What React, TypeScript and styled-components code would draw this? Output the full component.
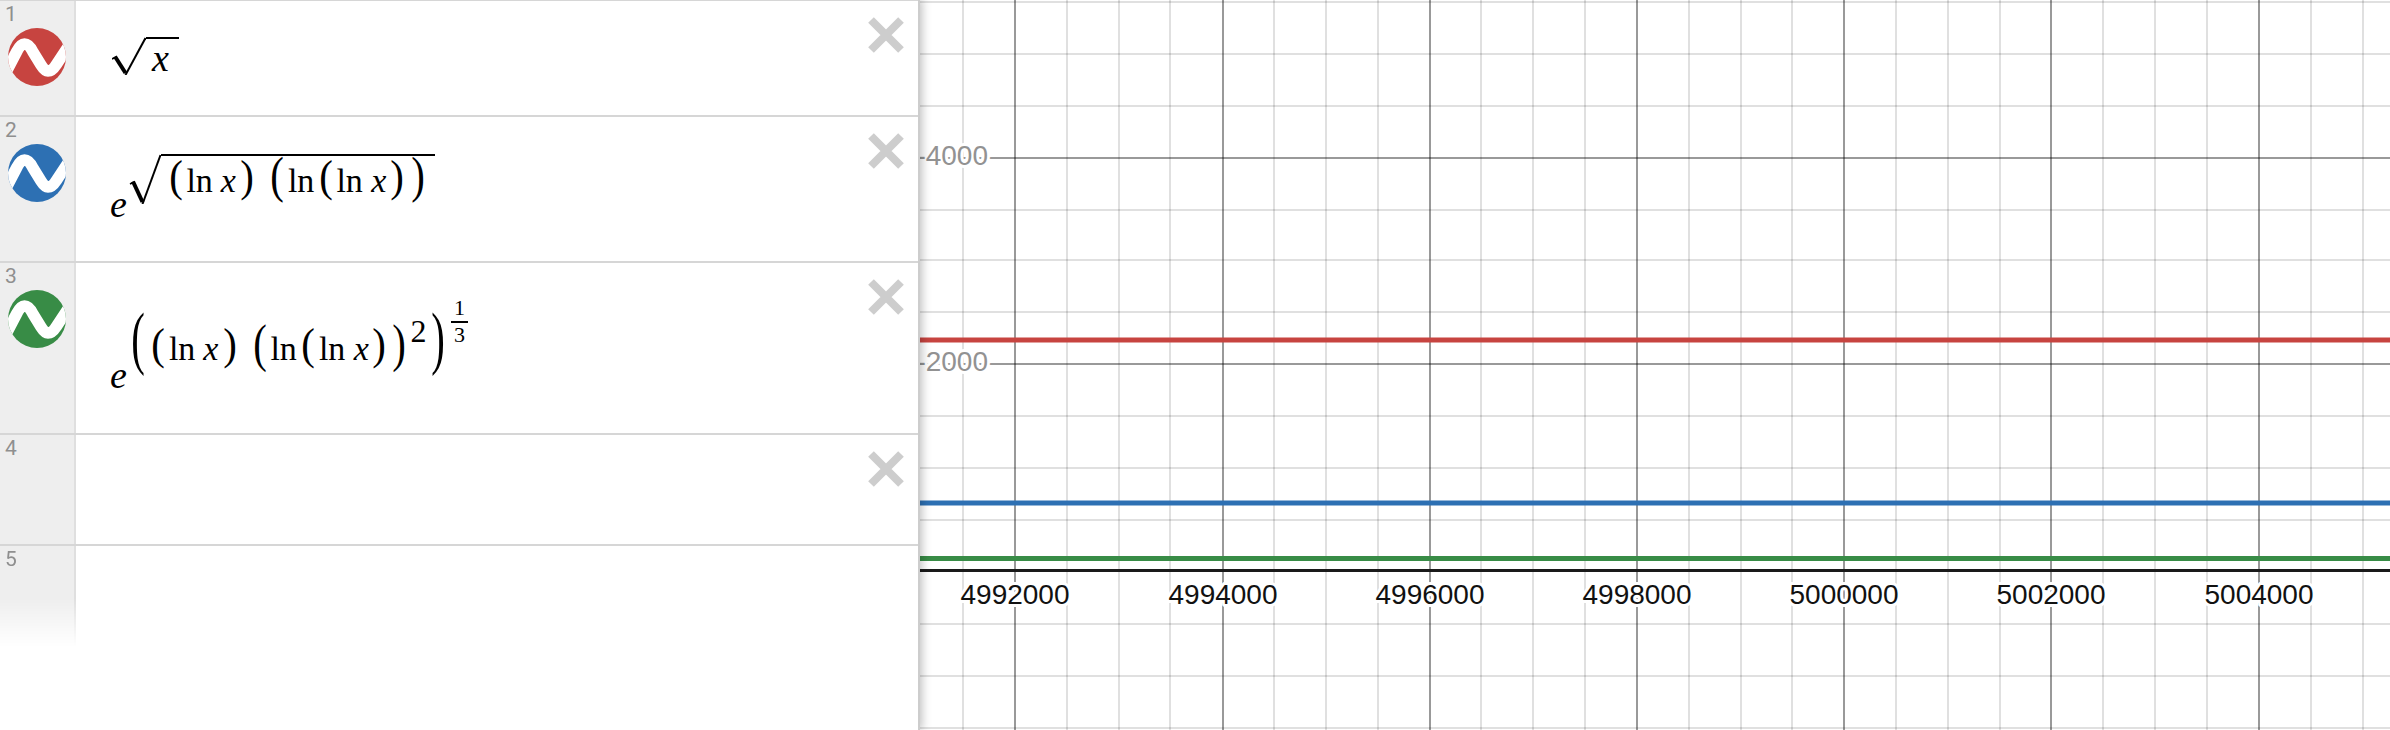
import React from 'react'
import styled, {createGlobalStyle} from 'styled-components'

const GlobalStyle = createGlobalStyle`
  html, body {
    margin: 0;
    height: 100%;
    background: #fff;
    overflow: hidden;
  }
`

const Page = styled.div`
  display: flex;
  width: 2390px;
  height: 730px;
  overflow: hidden;
  font-family: 'Liberation Sans', Arial, sans-serif;
`

const Panel = styled.div`
  position: relative;
  z-index: 2;
  box-sizing: border-box;
  flex: 0 0 920px;
  height: 731px;
  margin-top: -1px;
  background: #fff;
  border-right: 2px solid #cdcdcd;
  box-shadow: 2px 0 9px rgba(0, 0, 0, 0.25);
`

const Row = styled.div<{$h: number}>`
  display: flex;
  box-sizing: border-box;
  height: ${(p) => p.$h}px;
  border-top: 2px solid #d6d6d6;
`

const Gutter = styled.div<{$fade?: boolean}>`
  box-sizing: border-box;
  flex: 0 0 76px;
  background: #eeeeee;
  border-right: 2px solid #dfdfdf;
  ${(p) => p.$fade && 'mask-image: linear-gradient(#000 52%, transparent 100%);'}
`

const LineNumber = styled.div`
  padding: 3px 0 0 5px;
  font-family: Roboto, 'Liberation Sans', sans-serif;
  font-size: 21px;
  line-height: 21px;
  color: #8f8f8f;
`

const Icon = styled.svg`
  display: block;
  margin: 3px 0 0 8px;
`

const MathCell = styled.div<{$left: number; $top: number}>`
  flex: 1;
  padding: ${(p) => p.$top}px 0 0 ${(p) => p.$left}px;
  font-family: 'Liberation Serif', 'Times New Roman', serif;
  font-size: 38px;
  line-height: 38px;
  color: #000;
  white-space: nowrap;
`

const Var = styled.i<{$ml?: number}>`
  display: inline-block;
  margin-left: ${(p) => p.$ml ?? 0}px;
`

const Fn = styled.span<{$ml?: number}>`
  display: inline-block;
  margin-left: ${(p) => p.$ml ?? 0}px;
`

const Paren = styled.span<{$ml?: number; $sy: number; $dy?: number}>`
  display: inline-block;
  width: 14px;
  margin-left: ${(p) => p.$ml ?? 0}px;
  text-align: center;
  transform: translateY(${(p) => p.$dy ?? -3.5}px) scale(1.2, ${(p) => p.$sy});
  transform-origin: 50% 59%;
`

const Raised = styled.span<{$by: number; $size: number}>`
  display: inline-block;
  vertical-align: ${(p) => p.$by}px;
  font-size: ${(p) => p.$size}px;
  line-height: ${(p) => p.$size}px;
`

const Power = styled.span<{$ml: number}>`
  display: inline-block;
  margin-left: ${(p) => p.$ml}px;
  vertical-align: 18px;
  font-size: 32px;
  line-height: 32px;
`

const Radical = styled.span<{$sign: number}>`
  position: relative;
  display: inline-block;
  padding-left: ${(p) => p.$sign}px;
`

const RadicalSign = styled.svg`
  position: absolute;
  left: 0;
  top: 0;
`

const Radicand = styled.span<{$pad: number; $right: number}>`
  display: inline-block;
  padding: ${(p) => p.$pad}px ${(p) => p.$right}px 0 0;
  border-top: 2px solid #000;
`

const Fraction = styled.span<{$ml: number}>`
  display: inline-flex;
  flex-direction: column;
  align-items: center;
  width: 17px;
  margin-left: ${(p) => p.$ml}px;
  vertical-align: 45px;
  font-size: 22px;
  line-height: 22px;
`

const FractionBar = styled.span`
  display: block;
  width: 17px;
  height: 2px;
  margin: 2px 0 1px;
  background: #000;
`

const DeleteIcon = styled.svg`
  flex: none;
  margin: 16px 14px 0 0;
`

const Graph = styled.div`
  flex: 1;
  height: 730px;
  background: #fff;
`

const GraphSvg = styled.svg`
  display: block;
`

const AxisLabel = styled.text<{$fill: string}>`
  font-family: 'Liberation Sans', Arial, sans-serif;
  font-size: 28px;
  fill: ${(p) => p.$fill};
  stroke: #fff;
  stroke-width: 6px;
  stroke-linejoin: round;
  paint-order: stroke;
`

const WAVE = 'M-3 46L8.5 24C11 19 13.5 16 16.5 16C20 16 22.5 19 25 24L33 37C35.5 41 37.5 43 40 43C43 43 45.5 41 48 37L62 16'

const ExprIcon = ({color, id}: {color: string; id: string}) => (
  <Icon width='58' height='58' viewBox='0 0 58 58'>
    <clipPath id={id}>
      <circle cx='29' cy='29' r='29' />
    </clipPath>
    <circle cx='29' cy='29' r='29' fill={color} />
    <path d={WAVE} fill='none' stroke='#fff' strokeWidth='11.5' clipPath={`url(#${id})`} />
  </Icon>
)

const DeleteX = () => (
  <DeleteIcon width='36' height='36' viewBox='0 0 36 36'>
    <path d='M3 3L33 33M33 3L3 33' stroke='#cdcdcd' strokeWidth='8' fill='none' />
  </DeleteIcon>
)

type SignProps = {w: number; h: number; run: number; rise: number; start: number}

const Sign = ({w, h, run, rise, start}: SignProps) => (
  <RadicalSign width={w} height={h} viewBox={`0 0 ${w} ${h}`}>
    <path d={`M${start} ${h - rise + 2}L${start + 4} ${h - rise}`} stroke='#000' strokeWidth='1.6' fill='none' />
    <path d={`M${start + 3} ${h - rise - 0.5}L${w - run} ${h - 2}`} stroke='#000' strokeWidth='4' fill='none' />
    <path d={`M${w - run} ${h}L${w - 0.5} 1`} stroke='#000' strokeWidth='2' fill='none' />
  </RadicalSign>
)

// rows 2 and 3 share this body, only the lead gap and the big paren height differ
const LnProduct = ({lead, big}: {lead: number; big: number}) => (
  <>
    <Paren $ml={lead} $sy={1.32}>(</Paren>
    <Fn $ml={3.5}>ln</Fn>
    <Var $ml={8}>x</Var>
    <Paren $ml={4.5} $sy={1.32}>)</Paren>
    <Paren $ml={16} $sy={big}>(</Paren>
    <Fn $ml={3.5}>ln</Fn>
    <Paren $ml={4.5} $sy={1.32}>(</Paren>
    <Fn $ml={3.5}>ln</Fn>
    <Var $ml={8.5}>x</Var>
    <Paren $ml={3.5} $sy={1.32}>)</Paren>
  </>
)

const MINOR_X = 207.33 / 4
const xs = Array.from({length: 29}, (_, i) => 1015 + (i - 1) * MINOR_X)
const ys = [2, 54, 106, 158, 210, 260, 312, 364, 416, 468, 520, 572, 624, 676, 728]
const MAJOR_X = [1015, 1223, 1430, 1637, 1844, 2051, 2259]
const MAJOR_Y = [158, 364]
const X_LABELS = ['4992000', '4994000', '4996000', '4998000', '5000000', '5002000', '5004000']

const GraphPaper = () => (
  <GraphSvg width='1470' height='730' viewBox='920 0 1470 730'>
    {xs
      .filter((_, i) => (i - 1) % 4 !== 0)
      .map((x) => (
        <line key={x} x1={Math.round(x)} x2={Math.round(x)} y1='0' y2='730' stroke='#000' strokeOpacity='0.12' strokeWidth='2' />
      ))}
    {ys
      .filter((y) => !MAJOR_Y.includes(y) && y !== 572)
      .map((y) => (
        <line key={y} x1='920' x2='2390' y1={y} y2={y} stroke='#000' strokeOpacity='0.12' strokeWidth='2' />
      ))}
    {MAJOR_X.map((x) => (
      <line key={x} x1={x} x2={x} y1='0' y2='730' stroke='#000' strokeOpacity='0.4' strokeWidth='2' />
    ))}
    {MAJOR_Y.map((y) => (
      <line key={y} x1='920' x2='2390' y1={y} y2={y} stroke='#000' strokeOpacity='0.4' strokeWidth='2' />
    ))}
    <line x1='920' x2='2390' y1='340' y2='340' stroke='#c74440' strokeWidth='5' />
    <line x1='920' x2='2390' y1='503' y2='503' stroke='#2d70b3' strokeWidth='5' />
    <line x1='920' x2='2390' y1='558.5' y2='558.5' stroke='#388c46' strokeWidth='5' />
    <line x1='920' x2='2390' y1='570.5' y2='570.5' stroke='#1a1a1a' strokeWidth='3' />
    <AxisLabel $fill='#929292' x='988' y='165' textAnchor='end'>-4000</AxisLabel>
    <AxisLabel $fill='#929292' x='988' y='371' textAnchor='end'>-2000</AxisLabel>
    {X_LABELS.map((label, i) => (
      <AxisLabel key={label} $fill='#111' x={MAJOR_X[i]} y='604' textAnchor='middle'>
        {label}
      </AxisLabel>
    ))}
  </GraphSvg>
)

export default function App() {
  return (
    <Page>
      <GlobalStyle />
      <Panel>
        <Row $h={116}>
          <Gutter>
            <LineNumber>1</LineNumber>
            <ExprIcon color='#c74440' id='wave-1' />
          </Gutter>
          <MathCell $left={36} $top={36}>
            <Radical $sign={34}>
              <Sign w={34} h={38} run={20.5} rise={18} start={0} />
              <Radicand $pad={0} $right={10}>
                <Var $ml={6}>x</Var>
              </Radicand>
            </Radical>
          </MathCell>
          <DeleteX />
        </Row>
        <Row $h={146}>
          <Gutter>
            <LineNumber>2</LineNumber>
            <ExprIcon color='#2d70b3' id='wave-2' />
          </Gutter>
          <MathCell $left={34} $top={37}>
            <i>e</i>
            <Raised $by={25} $size={34}>
              <Radical $sign={34}>
                <Sign w={34} h={50} run={18.5} rise={22} start={3} />
                <Radicand $pad={8} $right={10}>
                  <LnProduct lead={8} big={1.5} />
                  <Paren $ml={7} $sy={1.5}>)</Paren>
                </Radicand>
              </Radical>
            </Raised>
          </MathCell>
          <DeleteX />
        </Row>
        <Row $h={172}>
          <Gutter>
            <LineNumber>3</LineNumber>
            <ExprIcon color='#388c46' id='wave-3' />
          </Gutter>
          <MathCell $left={34} $top={34}>
            <i>e</i>
            <Raised $by={28} $size={34}>
              <Paren $ml={4} $sy={2.03} $dy={-7.5}>(</Paren>
              <LnProduct lead={6.5} big={1.54} />
              <Paren $ml={6} $sy={1.54}>)</Paren>
              <Power $ml={4}>2</Power>
              <Paren $ml={5} $sy={2.03} $dy={-7.5}>)</Paren>
              <Fraction $ml={5.5}>
                <span>1</span>
                <FractionBar />
                <span>3</span>
              </Fraction>
            </Raised>
          </MathCell>
          <DeleteX />
        </Row>
        <Row $h={111}>
          <Gutter>
            <LineNumber>4</LineNumber>
          </Gutter>
          <MathCell $left={34} $top={36} />
          <DeleteX />
        </Row>
        <Row $h={103}>
          <Gutter $fade>
            <LineNumber>5</LineNumber>
          </Gutter>
          <MathCell $left={34} $top={36} />
        </Row>
      </Panel>
      <Graph>
        <GraphPaper />
      </Graph>
    </Page>
  )
}
